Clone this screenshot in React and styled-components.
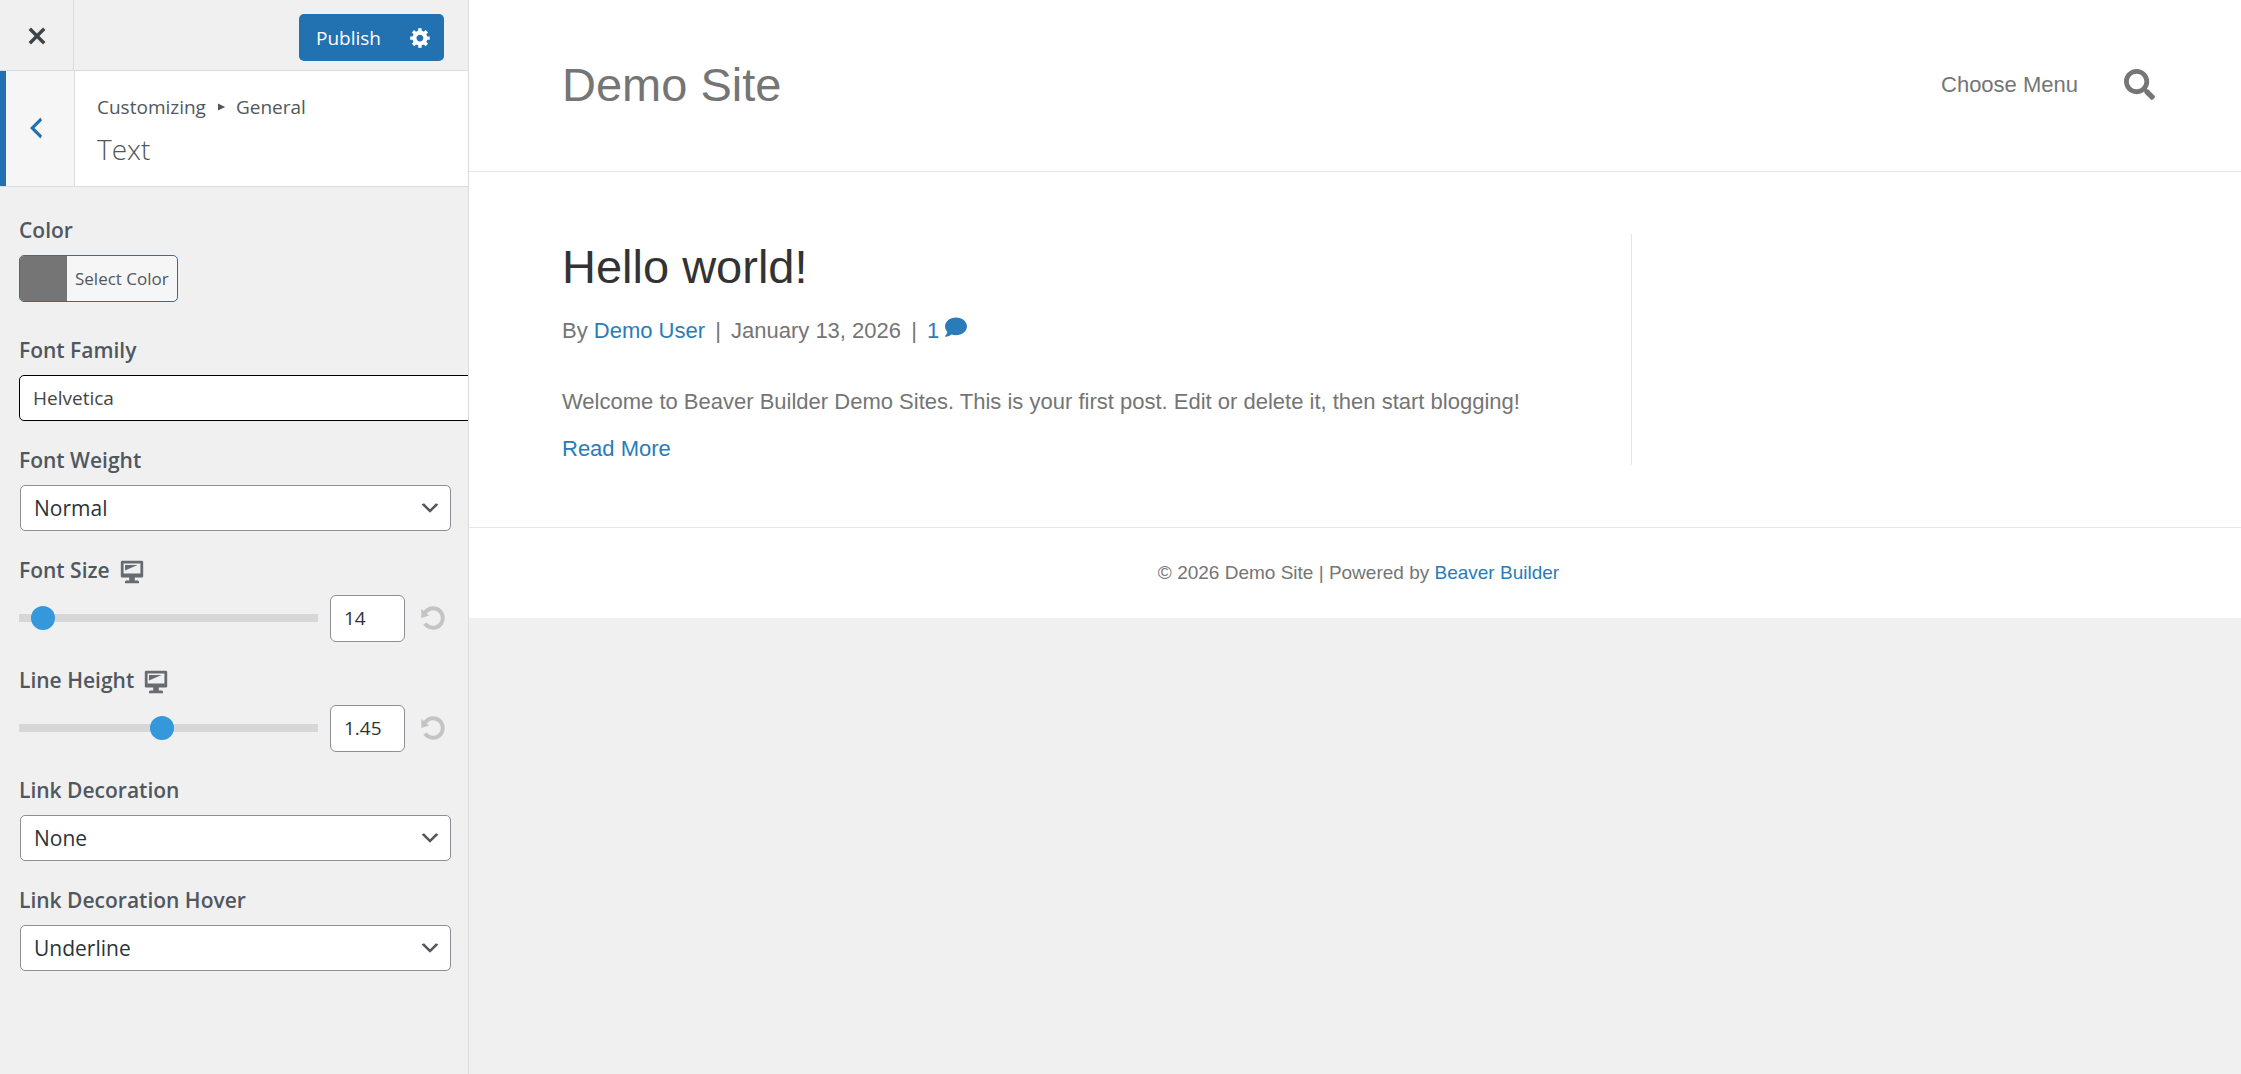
import React, { useState } from 'react';
import styled, { createGlobalStyle } from 'styled-components';
import { FaComment, FaSearch } from 'react-icons/fa';

const GlobalStyle = createGlobalStyle`
  * {
    box-sizing: border-box;
  }

  body {
    margin: 0;
    background: #f0f0f0;
  }

  button,
  input,
  select {
    margin: 0;
    font-family: inherit;
  }
`;

const Page = styled.div`
  display: flex;
  min-height: 100vh;
`;

/* Customizer panel */

const Sidebar = styled.aside`
  flex: 0 0 469px;
  overflow: hidden;
  border-right: 1px solid #dcdcde;
  background: #f0f0f0;
  color: #50575e;
  font-family: 'Open Sans', 'Noto Sans', sans-serif;
  font-size: 19px;
`;

const Actions = styled.div`
  display: flex;
  justify-content: space-between;
  align-items: center;
  height: 71px;
  padding-right: 24px;
  border-bottom: 1px solid #dcdcde;
`;

const CloseButton = styled.button`
  display: flex;
  justify-content: center;
  align-items: center;
  align-self: stretch;
  width: 74px;
  padding: 2px 0 0;
  border: 0;
  border-right: 1px solid #dcdcde;
  background: transparent;
  color: #3c434a;
`;

const PublishGroup = styled.div`
  display: flex;
  height: 47px;
  margin-top: 4px;
`;

const PublishButton = styled.button`
  padding: 2px 15px 0 17px;
  border: 0;
  border-radius: 5px 0 0 5px;
  background: #2271b1;
  color: #fff;
  font-size: 19px;
`;

const SettingsButton = styled.button`
  display: flex;
  justify-content: center;
  align-items: center;
  width: 48px;
  padding: 0;
  border: 0;
  border-radius: 0 5px 5px 0;
  background: #2271b1;
  color: #fff;
`;

const SectionHeader = styled.div`
  display: flex;
  height: 116px;
  border-bottom: 1px solid #dcdcde;
  background: #fff;
`;

const BackButton = styled.button`
  display: flex;
  align-items: center;
  width: 75px;
  padding: 0 0 2px 15px;
  border: 0;
  border-left: 6px solid #2271b1;
  border-right: 1px solid #dcdcde;
  background: #f6f6f6;
  color: #2271b1;
`;

const SectionTitle = styled.div`
  padding: 20px 22px;
`;

const Breadcrumb = styled.div`
  display: flex;
  align-items: center;
  gap: 9px;
  line-height: 32px;
`;

const Heading = styled.h3`
  margin: 0;
  font-size: 28px;
  font-weight: 300;
  line-height: 52px;
`;

const Controls = styled.div`
  display: flex;
  flex-direction: column;
  gap: 25px;
  padding: 29px 17px 29px 19px;
`;

const Control = styled.div`
  display: flex;
  flex-direction: column;
  align-items: flex-start;
  gap: 11px;
  margin-bottom: ${({ $spaced }) => ($spaced ? '9px' : '0')};
`;

const LabelRow = styled.div`
  display: flex;
  align-items: center;
  gap: 8px;
  height: 28px;
`;

const Label = styled.label`
  font-size: 21px;
  font-weight: 600;
  line-height: 28px;
`;

const DeviceButton = styled.button`
  display: flex;
  padding: 4px 0 0;
  border: 0;
  background: transparent;
  color: #656b71;
`;

const ColorButton = styled.button`
  display: flex;
  height: 47px;
  padding: 0;
  overflow: hidden;
  border: 1px solid #2271b1;
  border-radius: 5px;
  background: #f6f6f6;
  color: #50575e;
  font-size: 17px;
`;

const Swatch = styled.span`
  align-self: stretch;
  width: 47px;
  background: #757575;
`;

const ColorText = styled.span`
  padding: 0 8px;
  line-height: 46px;
`;

/* Wider than the panel, which cuts it off at the right */
const FontInput = styled.input`
  width: 500px;
  height: 46px;
  padding: 0 13px;
  border: 1px solid #000;
  border-radius: 5px;
  background: #fff;
  color: #444;
  font-size: 19px;
`;

const SelectWrap = styled.div`
  display: grid;
  align-items: center;
  width: 100%;
  padding-left: 1px;

  > * {
    grid-area: 1 / 1;
  }

  > svg {
    justify-self: end;
    margin-right: 9px;
    color: #50575e;
    pointer-events: none;
  }
`;

const Select = styled.select`
  width: 100%;
  height: 46px;
  padding: 0 40px 0 13px;
  appearance: none;
  border: 1px solid #8c8f94;
  border-radius: 5px;
  background: #fff;
  color: #2c3338;
  font-size: 21px;
`;

const SliderRow = styled.div`
  display: flex;
  align-items: center;
  width: 100%;
  height: 46px;
`;

const Slider = styled.input`
  flex: 1;
  min-width: 0;
  height: 8px;
  margin-right: 12px;
  appearance: none;
  background: #d7d7d7;

  &::-webkit-slider-thumb {
    width: 24px;
    height: 24px;
    appearance: none;
    border-radius: 50%;
    background: #3498db;
  }
`;

const NumberInput = styled.input`
  width: 75px;
  height: 47px;
  padding: 0 0 0 13px;
  appearance: textfield;
  border: 1px solid #8c8f94;
  border-radius: 6px;
  background: #fff;
  color: #2c3338;
  font-size: 19px;

  &::-webkit-inner-spin-button {
    display: none;
  }
`;

const ResetButton = styled.button`
  display: flex;
  margin-left: 15px;
  padding: 0 5px 0 0;
  border: 0;
  background: transparent;
  color: #c3c4c5;
`;

/* Site preview */

const Preview = styled.main`
  flex: 1;
  min-width: 0;
  color: #757575;
  font-family: 'Liberation Sans', Arial, sans-serif;
  font-size: 22px;
  line-height: 32px;
`;

const SiteHeader = styled.header`
  display: flex;
  justify-content: space-between;
  align-items: center;
  height: 172px;
  padding: 0 86px 2px 93px;
  border-bottom: 1px solid #e6e6e6;
  background: #fff;
`;

const SiteTitle = styled.a`
  color: #757575;
  font-size: 47px;
  line-height: 66px;
  text-decoration: none;
`;

const Nav = styled.nav`
  display: flex;
  align-items: center;
  gap: 46px;
`;

const NavLink = styled.a`
  color: #757575;
  text-decoration: none;
`;

const SearchButton = styled.button`
  display: flex;
  padding: 0;
  border: 0;
  background: transparent;
  color: #757575;
`;

const Content = styled.div`
  padding: 62px 86px 62px 93px;
  border-bottom: 1px solid #e6e6e6;
  background: #fff;
`;

const Post = styled.article`
  width: 67.2%;
  border-right: 1px solid #e6e6e6;
`;

const PostTitle = styled.h2`
  margin: 0 0 15px;
  color: #333;
  font-size: 47px;
  font-weight: 400;
  line-height: 66px;
`;

const PostMeta = styled.div`
  margin-bottom: 39px;
`;

const Separator = styled.span`
  margin: 0 4px;
`;

const Paragraph = styled.p`
  margin: 0 0 15px;
`;

const Link = styled.a`
  color: #2b7bb9;
  text-decoration: none;
`;

const Footer = styled.footer`
  padding: 31px 86px 31px 93px;
  background: #fff;
  font-size: 19px;
  line-height: 28px;
  text-align: center;
`;

const ICONS = {
  close:
    'M14.95 6.46L11.41 10l3.54 3.54-1.41 1.41L10 11.42l-3.53 3.53-1.42-1.42L8.58 10 5.05 6.47l1.42-1.42L10 8.58l3.54-3.53z',
  back: 'M14 5l-5 5 5 5-1 2-7-7 7-7z',
  down: 'M5 6l5 5 5-5 2 1-7 7-7-7 2-1z',
  right: 'M5 4l12 6-12 6z',
  gear:
    'M18 12h-2.18c-.17.7-.44 1.35-.81 1.93l1.54 1.54-2.1 2.1-1.54-1.54c-.58.36-1.23.63-1.91.79V19H8v-2.18c-.68-.16-1.33-.43-1.91-.79l-1.54 1.54-2.12-2.12 1.54-1.54c-.36-.58-.63-1.23-.79-1.91H1V9.03h2.17c.16-.7.44-1.35.8-1.94L2.43 5.55l2.1-2.1 1.54 1.54c.58-.37 1.24-.64 1.93-.81V2h3v2.18c.68.16 1.33.43 1.91.79l1.54-1.54 2.12 2.12-1.54 1.54c.36.59.64 1.24.8 1.94H18V12zm-8.5 1.5c1.66 0 3-1.34 3-3s-1.34-3-3-3-3 1.34-3 3 1.34 3 3 3z',
  desktop:
    'M3 2h14c.55 0 1 .45 1 1v10c0 .55-.45 1-1 1h-5v2h2c.55 0 1 .45 1 1v1H5v-1c0-.55.45-1 1-1h2v-2H3c-.55 0-1-.45-1-1V3c0-.55.45-1 1-1zm13 9V4H4v7h12zM5 5h9L5 9V5z',
  reset:
    'M10.25 1.02c5.1 0 8.75 4.04 8.75 9s-3.65 9-8.75 9c-3.2 0-6.02-1.59-7.68-3.99l2.59-1.52c1.1 1.5 2.86 2.51 4.84 2.51 3.3 0 6-2.79 6-6s-2.7-6-6-6c-1.97 0-3.72 1-4.82 2.49L7 8.02l-6 2v-7L2.89 4.6c1.69-2.17 4.36-3.58 7.36-3.58z',
};

const Icon = ({ name, size }) => (
  <svg width={size} height={size} viewBox="0 0 20 20" fill="currentColor" aria-hidden="true">
    <path d={ICONS[name]} />
  </svg>
);

const SelectControl = ({ id, label, options }) => (
  <Control>
    <Label htmlFor={id}>{label}</Label>
    <SelectWrap>
      <Select id={id}>
        {options.map(option => (
          <option key={option}>{option}</option>
        ))}
      </Select>
      <Icon name="down" size={24} />
    </SelectWrap>
  </Control>
);

const SliderControl = ({ id, label, initial, min, max, step }) => {
  const [value, setValue] = useState(initial);
  const onChange = e => setValue(e.target.value);
  const range = { min, max, step, value, onChange };

  return (
    <Control>
      <LabelRow>
        <Label htmlFor={id}>{label}</Label>
        <DeviceButton type="button" aria-label="Desktop">
          <Icon name="desktop" size={28} />
        </DeviceButton>
      </LabelRow>
      <SliderRow>
        <Slider type="range" aria-label={label} {...range} />
        <NumberInput type="number" id={id} {...range} />
        <ResetButton type="button" aria-label="Reset" onClick={() => setValue(initial)}>
          <Icon name="reset" size={26} />
        </ResetButton>
      </SliderRow>
    </Control>
  );
};

const Customizer = () => (
  <Sidebar>
    <Actions>
      <CloseButton type="button" aria-label="Close">
        <Icon name="close" size={34} />
      </CloseButton>
      <PublishGroup>
        <PublishButton type="button">Publish</PublishButton>
        <SettingsButton type="button" aria-label="Publish settings">
          <Icon name="gear" size={23} />
        </SettingsButton>
      </PublishGroup>
    </Actions>
    <SectionHeader>
      <BackButton type="button" aria-label="Back">
        <Icon name="back" size={30} />
      </BackButton>
      <SectionTitle>
        <Breadcrumb>
          Customizing <Icon name="right" size={12} /> General
        </Breadcrumb>
        <Heading>Text</Heading>
      </SectionTitle>
    </SectionHeader>
    <Controls>
      <Control $spaced>
        <Label htmlFor="color">Color</Label>
        <ColorButton type="button" id="color">
          <Swatch />
          <ColorText>Select Color</ColorText>
        </ColorButton>
      </Control>
      <Control>
        <Label htmlFor="font-family">Font Family</Label>
        <FontInput id="font-family" type="text" defaultValue="Helvetica" />
      </Control>
      <SelectControl id="font-weight" label="Font Weight" options={['Normal', 'Bold']} />
      <SliderControl id="font-size" label="Font Size" initial="14" min="10" max="100" step="1" />
      <SliderControl id="line-height" label="Line Height" initial="1.45" min="0.5" max="2.5" step="0.05" />
      <SelectControl id="link-decoration" label="Link Decoration" options={['None', 'Underline']} />
      <SelectControl id="link-decoration-hover" label="Link Decoration Hover" options={['Underline', 'None']} />
    </Controls>
  </Sidebar>
);

const Site = () => (
  <Preview>
    <SiteHeader>
      <SiteTitle href="#">Demo Site</SiteTitle>
      <Nav>
        <NavLink href="#">Choose Menu</NavLink>
        <SearchButton type="button" aria-label="Search">
          <FaSearch size={31} />
        </SearchButton>
      </Nav>
    </SiteHeader>
    <Content>
      <Post>
        <PostTitle>Hello world!</PostTitle>
        <PostMeta>
          By <Link href="#">Demo User</Link> <Separator>|</Separator> January 13, 2026 <Separator>|</Separator>{' '}
          <Link href="#">
            1 <FaComment size={22} />
          </Link>
        </PostMeta>
        <Paragraph>
          Welcome to Beaver Builder Demo Sites. This is your first post. Edit or delete it, then start blogging!
        </Paragraph>
        <Link href="#">Read More</Link>
      </Post>
    </Content>
    <Footer>
      © 2026 Demo Site | Powered by <Link href="#">Beaver Builder</Link>
    </Footer>
  </Preview>
);

const App = () => (
  <Page>
    <GlobalStyle />
    <Customizer />
    <Site />
  </Page>
);

export default App;
